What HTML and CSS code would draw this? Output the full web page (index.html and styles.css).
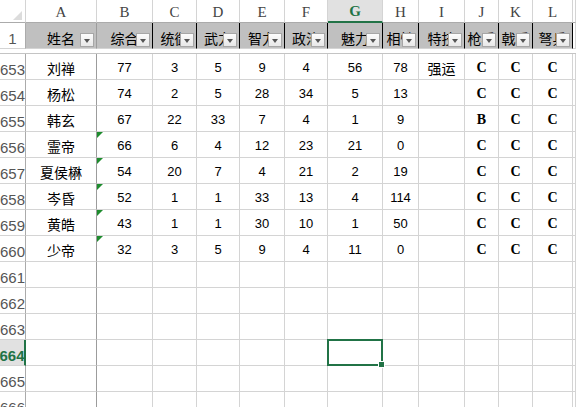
FILE: index.html
```html
<!DOCTYPE html>
<html lang="zh">
<head>
    <meta charset="UTF-8">
    <title>武将数据</title>
    <link rel="stylesheet" href="styles.css">
</head>
<body>
    <div class="sheet">
        <div class="row cols">
            <div class="corner"><span class="corner-mark"></span></div>
            <div>A</div><div>B</div><div>C</div><div>D</div><div>E</div><div>F</div>
            <div class="on">G</div><div>H</div><div>I</div><div>J</div><div>K</div><div>L</div><div></div>
        </div>

        <div class="row head">
            <div class="rh">1</div>
            <div class="frz">姓名<span class="btn"></span></div>
            <div>综合<span class="btn"></span></div>
            <div>统御<span class="btn"></span></div>
            <div>武力<span class="btn"></span></div>
            <div>智力<span class="btn"></span></div>
            <div>政治<span class="btn"></span></div>
            <div>魅力<span class="btn"></span></div>
            <div>相性<span class="btn"></span></div>
            <div>特技<span class="btn"></span></div>
            <div>枪兵<span class="btn"></span></div>
            <div>戟兵<span class="btn"></span></div>
            <div>弩兵<span class="btn"></span></div>
            <div class="blank"></div>
        </div>

        <div class="split"></div>

        <div class="row">
            <div class="rh">653</div><div class="frz name">刘禅</div>
            <div>77</div><div>3</div><div>5</div><div>9</div><div>4</div><div>56</div><div>78</div>
            <div class="name">强运</div><div class="grade">C</div><div class="grade">C</div><div class="grade">C</div><div></div>
        </div>
        <div class="row">
            <div class="rh">654</div><div class="frz name">杨松</div>
            <div>74</div><div>2</div><div>5</div><div>28</div><div>34</div><div>5</div><div>13</div>
            <div></div><div class="grade">C</div><div class="grade">C</div><div class="grade">C</div><div></div>
        </div>
        <div class="row">
            <div class="rh">655</div><div class="frz name">韩玄</div>
            <div>67</div><div>22</div><div>33</div><div>7</div><div>4</div><div>1</div><div>9</div>
            <div></div><div class="grade">B</div><div class="grade">C</div><div class="grade">C</div><div></div>
        </div>
        <div class="row">
            <div class="rh">656</div><div class="frz name">霊帝</div>
            <div><span class="tri"></span>66</div><div>6</div><div>4</div><div>12</div><div>23</div><div>21</div><div>0</div>
            <div></div><div class="grade">C</div><div class="grade">C</div><div class="grade">C</div><div></div>
        </div>
        <div class="row">
            <div class="rh">657</div><div class="frz name">夏侯楙</div>
            <div><span class="tri"></span>54</div><div>20</div><div>7</div><div>4</div><div>21</div><div>2</div><div>19</div>
            <div></div><div class="grade">C</div><div class="grade">C</div><div class="grade">C</div><div></div>
        </div>
        <div class="row">
            <div class="rh">658</div><div class="frz name">岑昏</div>
            <div><span class="tri"></span>52</div><div>1</div><div>1</div><div>33</div><div>13</div><div>4</div><div>114</div>
            <div></div><div class="grade">C</div><div class="grade">C</div><div class="grade">C</div><div></div>
        </div>
        <div class="row">
            <div class="rh">659</div><div class="frz name">黄皓</div>
            <div><span class="tri"></span>43</div><div>1</div><div>1</div><div>30</div><div>10</div><div>1</div><div>50</div>
            <div></div><div class="grade">C</div><div class="grade">C</div><div class="grade">C</div><div></div>
        </div>
        <div class="row">
            <div class="rh">660</div><div class="frz name">少帝</div>
            <div><span class="tri"></span>32</div><div>3</div><div>5</div><div>9</div><div>4</div><div>11</div><div>0</div>
            <div></div><div class="grade">C</div><div class="grade">C</div><div class="grade">C</div><div></div>
        </div>

        <div class="row">
            <div class="rh">661</div><div class="frz"></div>
            <div></div><div></div><div></div><div></div><div></div><div></div><div></div><div></div><div></div><div></div><div></div><div></div>
        </div>
        <div class="row">
            <div class="rh">662</div><div class="frz"></div>
            <div></div><div></div><div></div><div></div><div></div><div></div><div></div><div></div><div></div><div></div><div></div><div></div>
        </div>
        <div class="row">
            <div class="rh">663</div><div class="frz"></div>
            <div></div><div></div><div></div><div></div><div></div><div></div><div></div><div></div><div></div><div></div><div></div><div></div>
        </div>
        <div class="row">
            <div class="rh on">664</div><div class="frz"></div>
            <div></div><div></div><div></div><div></div><div></div>
            <div class="act"><span class="sel"><span class="handle"></span></span></div>
            <div></div><div></div><div></div><div></div><div></div><div></div>
        </div>
        <div class="row">
            <div class="rh">665</div><div class="frz"></div>
            <div></div><div></div><div></div><div></div><div></div><div></div><div></div><div></div><div></div><div></div><div></div><div></div>
        </div>
        <div class="row">
            <div class="rh">666</div><div class="frz"></div>
            <div></div><div></div><div></div><div></div><div></div><div></div><div></div><div></div><div></div><div></div><div></div><div></div>
        </div>
    </div>
</body>
</html>
```

FILE: styles.css
```css
body {
    margin: 0;
    background: #fff;
    overflow: hidden;
    font-family: "Liberation Sans", "Noto Sans CJK SC", sans-serif;
    color: #000;
}
.sheet {
    width: 576px;
    height: 407px;
    overflow: hidden;
}
.row {
    display: grid;
    grid-template-columns: 26px 71px 56px 44px 43px 45px 43px 55px 36px 46px 34px 34px 40px 1fr;
    height: 26px;
}
.row > div {
    box-sizing: border-box;
    position: relative;
    display: flex;
    align-items: center;
    justify-content: center;
    overflow: hidden;
    white-space: nowrap;
    border-right: 1px solid #d4d4d4;
    border-bottom: 1px solid #d4d4d4;
    font-size: 13px;
    padding-top: 2px;
}
.name {
    font-family: "Noto Sans CJK SC", sans-serif;
    font-size: 14px !important;
}
.grade {
    font-family: "Liberation Serif", serif;
    font-weight: bold;
    font-size: 14px !important;
}
.frz {
    border-right-color: #9c9c9c !important;
}

/* column letters */
.cols {
    height: 23px;
}
.cols > div {
    align-items: flex-end !important;
    padding: 0 0 1px !important;
    font-family: "Liberation Serif", serif;
    font-size: 15px !important;
    color: #444;
    border-bottom-color: #ababab !important;
}
.cols > div.on {
    background: #e1e1e1;
    color: #217346;
    font-weight: bold;
    border-bottom: 2px solid #217346 !important;
}
.corner-mark {
    position: absolute;
    right: 3px;
    bottom: 2px;
    width: 0;
    height: 0;
    border-left: 9px solid transparent;
    border-bottom: 9px solid #dcdcdc;
}

/* row numbers */
.rh {
    align-items: flex-end !important;
    padding: 0 0 1px !important;
    font-size: 15px !important;
    color: #555;
    border-right-color: #ababab !important;
}
.rh.on {
    background: #e1e1e1;
    color: #217346;
    font-weight: bold;
    border-right: 2px solid #217346 !important;
}

/* header row with filters */
.head > div {
    background: #c0c0c0;
    border-right-color: #000;
    font-family: "Noto Sans CJK SC", sans-serif;
    font-size: 14px;
    padding-top: 4px;
}
.head > div.rh {
    background: #fff;
    font-family: "Liberation Sans", sans-serif;
}
.head > div.blank {
    background: #fff;
    border-right-color: #d4d4d4;
}
.btn {
    position: absolute;
    right: 2px;
    bottom: 1px;
    width: 14px;
    height: 14px;
    box-sizing: border-box;
    border: 1px solid #a6a6a6;
    background: linear-gradient(#fcfcfc, #e8e8e8);
}
.btn::after {
    content: "";
    position: absolute;
    left: 3px;
    top: 5px;
    border-left: 3.5px solid transparent;
    border-right: 3.5px solid transparent;
    border-top: 4px solid #555;
}

.split {
    height: 3px;
    border-top: 1px solid #fff;
    border-bottom: 1px solid #c4c4c4;
    background: #fff;
}

/* number stored as text marker */
.tri {
    position: absolute;
    left: 0;
    top: 0;
    border-top: 6px solid #1e8c2e;
    border-right: 6px solid transparent;
}

/* active cell */
.row > div.act {
    overflow: visible;
    z-index: 1;
}
.sel {
    position: absolute;
    left: -1px;
    top: -1px;
    right: -1px;
    bottom: -1px;
    border: 2px solid #217346;
}
.handle {
    position: absolute;
    right: -4px;
    bottom: -4px;
    width: 5px;
    height: 5px;
    background: #217346;
    border: 1px solid #fff;
}
```
